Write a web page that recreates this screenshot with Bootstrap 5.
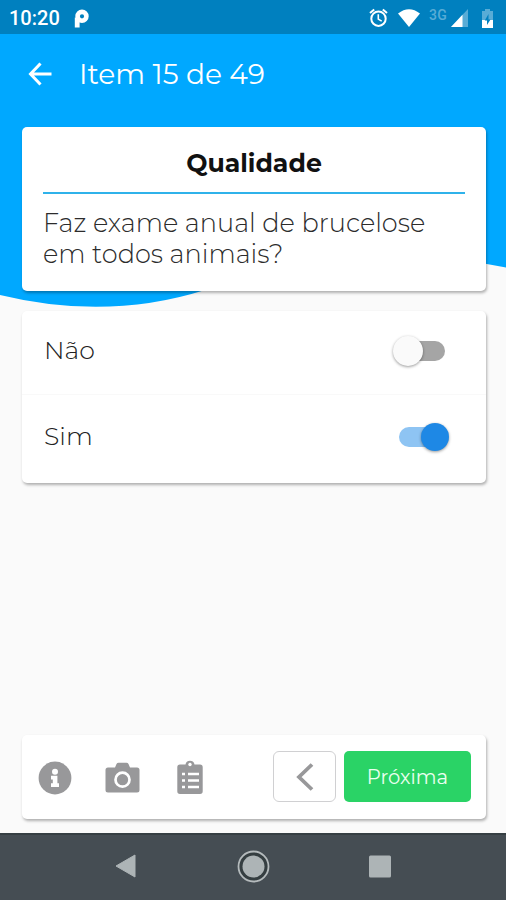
<!DOCTYPE html>
<html lang="pt-BR">
<head>
<meta charset="utf-8">
<meta name="viewport" content="width=device-width, initial-scale=1">
<title>Item 15 de 49</title>
<link href="https://cdn.jsdelivr.net/npm/bootstrap@5.3.0/dist/css/bootstrap.min.css" rel="stylesheet">
<style>
  body { font-family: Montserrat, Inter, sans-serif; background: #fafafa; color: #222; }
  .screen { height: 900px; isolation: isolate; overflow: hidden; }
  .wave { top: 0; left: 0; z-index: -1; }
  .status { height: 34px; background: #0080bf; font: 500 20px/34px Roboto, sans-serif; padding: 2px 13px 0 9px; }
  .status svg, .topbar svg, .tools svg, .sysnav svg { display: block; flex: none; }
  .logo-p { margin-left: 14px; }
  .wifi { margin-left: 10px; }
  .net { font: 500 14px/14px Roboto, sans-serif; color: #58acd6; margin: -6px 4px 0 9px; letter-spacing: .2px; }
  .battery { margin-left: 14px; }
  .topbar { height: 80px; padding: 0 28px; }
  .topbar h1 { font-size: 28.1px; font-weight: 400; margin-left: 27px; line-height: 34px; }
  .panel { border: 0; border-radius: 5px; margin: 0 20px 0 22px; box-shadow: 1px 2px 3px rgba(0,0,0,.3); }
  .question { height: 164px; margin-top: 13px; padding: 20px 21px; }
  .question h2 { font-size: 25.2px; font-weight: 700; line-height: 32px; color: #111; margin: 0; padding-bottom: 13px; border-bottom: 2px solid #2fb2ea; }
  .question p { font-size: 25.6px; font-weight: 300; line-height: 31px; margin: 13px 0 0; white-space: nowrap; color: #2c2c2c; }
  .answers { height: 172px; margin-top: 20px; }
  .answer { height: 85px; padding: 0 36px 0 22px; font-size: 25.2px; font-weight: 300; }
  .answer + .answer { border-top: 1px solid #f9f9f9; }
  .answer:first-child { height: 83px; padding-bottom: 3px; }
  .toggle { width: 46px; height: 20px; border-radius: 10px; background: #a5a5a5; display: flex; align-items: center; margin-right: 5px; }
  .toggle::before { content: ""; width: 30px; height: 30px; flex: none; border-radius: 50%; background: #fafafa; box-shadow: 0 1px 3px rgba(0,0,0,.4); margin-left: -6px; }
  .toggle.on { background: #8ec4f3; justify-content: flex-end; }
  .toggle.on::before { width: 28px; height: 28px; background: #1e88e5; margin: 0 -4px 0 0; }
  .tools { height: 84px; padding: 1px 15px 0 16px; }
  .tool-camera { margin-left: 33px; }
  .tool-list { margin-left: 37px; }
  .btn-prev { width: 63px; height: 51px; border: 1.500px solid #d0d0d2; border-radius: 6px; margin: -2px 8px 0 0; }
  .btn-next, .btn-next:hover { width: 127px; height: 51px; margin-top: -2px; border: 0; border-radius: 5px; background: #2ad366; color: #eafff0; font-size: 19.6px; }
  .btn-next { padding: 2px 0 0; }
  .sysnav { height: 67px; margin-top: 14px; padding-bottom: 3px; background: #454d53; border-top: 2px solid #363f43; }
  .nav-back { margin-left: 115px; }
  .nav-home { margin-left: 101px; }
  .nav-recent { margin-left: 99px; }
</style>
<script src="https://cdn.jsdelivr.net/npm/bootstrap@5.3.0/dist/js/bootstrap.bundle.min.js"></script>
</head>
<body>
<div class="screen d-flex flex-column position-relative">
  <svg class="wave position-absolute" width="506" height="320" viewBox="0 0 506 320" aria-hidden="true"><path fill="#00a8ff" d="M0 0H506V267.500Q390 244 290 265C250 274 228 283 205 290Q107 321 0 295Z"/></svg>

  <div class="status d-flex align-items-center text-white">
    <span>10:20</span>
    <svg class="logo-p" width="15" height="19" viewBox="0 0 15 19"><path fill="none" stroke="#fff" stroke-width="4.800" d="M3.200 18.500V8.500"/><circle cx="8" cy="7.300" r="4.400" fill="none" stroke="#fff" stroke-width="4.600"/></svg>
    <svg class="ms-auto" width="19" height="20" viewBox="0 0 19 20" fill="none" stroke="#fff"><circle cx="9.500" cy="10.700" r="7.200" stroke-width="2"/><path stroke-width="2" d="M1 5l4.200-3.600M18 5l-4.200-3.600"/><path stroke-width="1.600" d="M9.300 6.300v4.800l3.400 2"/></svg>
    <svg class="wifi" width="22" height="18" viewBox="0 0 23 18" preserveAspectRatio="none"><path fill="#fff" d="M0 4.500Q11.500-4 23 4.500L11.500 18Z"/></svg>
    <span class="net">3G</span>
    <svg width="17" height="18" viewBox="0 0 17 18"><path fill="#58acd6" d="M17 0v18H0Z"/><path fill="#fff" d="M11.500 5.800V18H0Z"/></svg>
    <svg class="battery" width="11" height="19" viewBox="0 0 11 19"><path fill="#58acd6" d="M0 2h3V0h5v2h3v9H0Z"/><path fill="#fff" d="M0 11h11v8H0Z"/><path fill="#0080bf" d="M6.500 5v5.500h2L5 16v-4.500H2.800Z"/></svg>
  </div>

  <header class="topbar d-flex align-items-center text-white">
    <svg width="24" height="24" viewBox="0 0 24 24" fill="none" stroke="#fff" stroke-width="3"><path d="M12.500 1.500L2.500 12l10 10.500M2.500 12H23.500"/></svg>
    <h1 class="mb-0">Item 15 de 49</h1>
  </header>

  <section class="card panel question">
    <h2 class="text-center">Qualidade</h2>
    <p>Faz exame anual de brucelose<br>em todos animais?</p>
  </section>

  <section class="card panel answers">
    <div class="answer d-flex align-items-center justify-content-between"><span>Não</span><span class="toggle" role="switch" aria-checked="false"></span></div>
    <div class="answer d-flex align-items-center justify-content-between"><span>Sim</span><span class="toggle on" role="switch" aria-checked="true"></span></div>
  </section>

  <footer class="mt-auto">
    <div class="card panel tools flex-row align-items-center">
      <svg width="34" height="34" viewBox="0 0 34 34"><circle cx="17" cy="17" r="16.400" fill="#98989a"/><circle cx="17" cy="10.700" r="3" fill="#fff"/><path fill="#fff" d="M13 14.800h6.400v7.500H21V26h-8v-3.700h1.800v-3.800H13Z"/></svg>
      <svg class="tool-camera" width="35" height="31" viewBox="0 0 35 31"><path fill="#98989a" d="M3 5.500h7l1.500-3.500Q12.200.8 13.500.8h8q1.300 0 2 1.200L25 5.500h7q2.500 0 2.500 2.500v20q0 2.500-2.500 2.500H3Q.5 30.500.5 28V8Q.5 5.500 3 5.500Z"/><circle cx="17.500" cy="17.700" r="7" fill="none" stroke="#fff" stroke-width="2.700"/></svg>
      <svg class="tool-list" width="26" height="35" viewBox="0 0 26 35"><path fill="#98989a" d="M3 4.500h5.500a4.600 4.600 0 0 1 9 0H23q2.700 0 2.700 2.700v24q0 2.700-2.700 2.700H3Q.3 33.900.3 31.200v-24Q.3 4.500 3 4.500Z"/><circle cx="13" cy="4.500" r="1.700" fill="#fff"/><path stroke="#fff" stroke-width="2.300" d="M5 14h3M11 14h11M5 20.500h3M11 20.500h11M5 27h3M11 27h11"/></svg>
      <button class="btn btn-prev bg-white p-0 ms-auto d-flex align-items-center justify-content-center" aria-label="Anterior"><svg width="18" height="28" viewBox="0 0 18 28" fill="none" stroke="#98989a" stroke-width="3.800"><path d="M16 1.500L3 14l13 12.500"/></svg></button>
      <button class="btn btn-next">Próxima</button>
    </div>
    <nav class="sysnav d-flex align-items-center">
      <svg class="nav-back" width="21" height="24" viewBox="0 0 21 24"><path fill="#adb4b6" stroke="#adb4b6" stroke-linejoin="round" d="M20 1v22L1 12Z"/></svg>
      <svg class="nav-home" width="33" height="33" viewBox="0 0 33 33"><circle cx="16.500" cy="16.500" r="15" fill="#353e41" stroke="#b4babc" stroke-width="1.800"/><circle cx="16.500" cy="16.500" r="11" fill="#adb4b6"/></svg>
      <svg class="nav-recent" width="22" height="23" viewBox="0 0 22 23"><rect width="22" height="22" y=".5" rx="1.500" fill="#adb4b6"/></svg>
    </nav>
  </footer>
</div>
</body>
</html>
